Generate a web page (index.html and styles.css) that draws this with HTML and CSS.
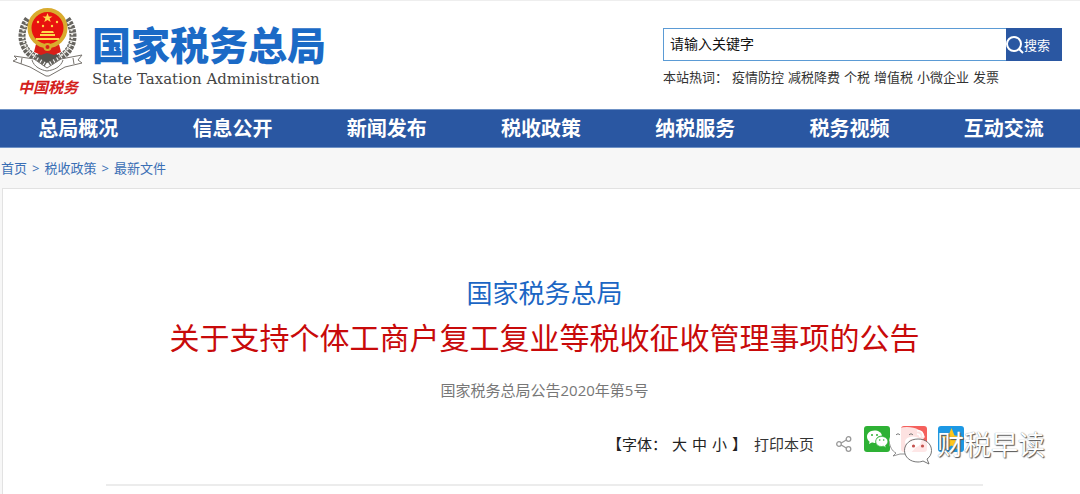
FILE: index.html
```
<!DOCTYPE html>
<html lang="zh-CN">
<head>
    <meta charset="UTF-8">
    <meta name="viewport" content="width=device-width, initial-scale=1.0">
    <title>国家税务总局</title>
    <link rel="stylesheet" href="styles.css">
</head>
<body>
    <header class="header">
        <a href="#" class="brand">
            <span class="emblem">
                <svg viewBox="12 5 72 71" width="72" height="71" aria-hidden="true">
                    <!-- wheat ears -->
                    <g fill="none" stroke="#66645f" stroke-width="7" stroke-dasharray="3 1">
                        <path d="M28 18C19 30 19 48 36 57L46 63"/>
                        <path d="M67 18C76 30 76 48 59 57L49 63"/>
                    </g>
                    <g fill="none" stroke="#e9e7e0" stroke-width="2" stroke-dasharray="2 2">
                        <path d="M27 21C20 32 21 46 36 56"/>
                        <path d="M68 21C75 32 74 46 59 56"/>
                    </g>
                    <!-- ribbon -->
                    <path d="M13 60L17 58 14 55 34 58 47 67 61 58 82 54 78 59 82 62 65 66 49 75H46L30 66Z" fill="#fff" stroke="#77736e"/>
                    <path d="M22 57L21 63M73 57L74 63M32 59C34 66 41 69 47 70C54 69 61 66 63 59" fill="none" stroke="#77736e"/>
                    <path d="M36 55L47 62 59 55 54 51H41Z" fill="#55544f"/>
                    <!-- national emblem -->
                    <path d="M36 43L34 51 41 54 47 52 54 54 61 51 59 43Z" fill="#d91e18"/>
                    <circle cx="47.5" cy="27" r="18" fill="#e8130f" stroke="#d9ab2e" stroke-width="4"/>
                    <path d="M47.5 12L48.8 15.5H52.5L49.6 17.6 50.7 21 47.5 19 44.3 21 45.4 17.6 42.5 15.5H46.2Z" fill="#ffd94a"/>
                    <g fill="#ffd94a">
                        <circle cx="38" cy="21" r="1.2"/>
                        <circle cx="57" cy="21" r="1.2"/>
                        <circle cx="43" cy="25" r="1.2"/>
                        <circle cx="52" cy="25" r="1.2"/>
                        <path d="M42 30H53L54 32H41ZM40 33H55V35H40ZM36 37H59V39H36Z"/>
                    </g>
                    <circle cx="47.5" cy="46" r="4" fill="#d9ab2e"/>
                    <circle cx="47.5" cy="46" r="2" fill="#d91e18"/>
                </svg>
                <span class="emblem-text">中国税务</span>
            </span>
            <span class="brand-name">
                <span class="brand-cn">国家税务总局</span>
                <span class="brand-en">State Taxation Administration</span>
            </span>
        </a>

        <div class="search">
            <form class="search-form">
                <input type="text" class="search-input" value="请输入关键字" aria-label="请输入关键字">
                <button type="button" class="search-button">
                    <svg viewBox="0 0 18 18" width="18" height="18" fill="none" stroke="#fff" stroke-width="2" aria-hidden="true">
                        <circle cx="8" cy="8" r="7"/>
                        <path d="M13 13L17 17"/>
                    </svg>搜索
                </button>
            </form>
            <div class="hot-words">
                <span class="hot-label">本站热词：</span>
                <a href="#">疫情防控</a>
                <a href="#">减税降费</a>
                <a href="#">个税</a>
                <a href="#">增值税</a>
                <a href="#">小微企业</a>
                <a href="#">发票</a>
            </div>
        </div>
    </header>

    <nav class="navbar">
        <a href="#">总局概况</a>
        <a href="#">信息公开</a>
        <a href="#">新闻发布</a>
        <a href="#">税收政策</a>
        <a href="#">纳税服务</a>
        <a href="#">税务视频</a>
        <a href="#">互动交流</a>
    </nav>

    <div class="breadcrumb">
        <a href="#">首页</a>
        <span>&gt;</span>
        <a href="#">税收政策</a>
        <span>&gt;</span>
        <a href="#">最新文件</a>
    </div>

    <main class="article">
        <h2 class="article-org">国家税务总局</h2>
        <h1 class="article-title">关于支持个体工商户复工复业等税收征收管理事项的公告</h1>
        <p class="article-number">国家税务总局公告2020年第5号</p>

        <div class="tools">
            <div class="font-size">
                <span>【字体：</span>
                <button type="button">大</button>
                <button type="button">中</button>
                <button type="button">小</button>
                <span>】</span>
            </div>
            <a href="#" class="print">打印本页</a>
            <svg class="share" viewBox="0 0 16 16" width="16" height="16" fill="none" stroke="#999" stroke-width="1.3" aria-hidden="true">
                <circle cx="3" cy="8" r="2.3"/>
                <circle cx="12.5" cy="3" r="2.3"/>
                <circle cx="12.5" cy="13" r="2.3"/>
                <path d="M5.2 7L10.3 4M5.2 9L10.3 12"/>
            </svg>
            <div class="share-icons">
                <a href="#" aria-label="微信">
                    <svg viewBox="0 0 26 26" width="26" height="26">
                        <rect width="26" height="26" rx="3" fill="#2eb135"/>
                        <path d="M10.5 4.5C6 4.5 3 7.3 3 10.8C3 13 4 14.5 5.6 15.7L5 18 7.8 16.6C9 17 10 17 11.5 17C11 12.5 14 9.5 18 9.5C17.5 6.5 14.5 4.5 10.5 4.5Z" fill="#fff"/>
                        <path d="M17.5 10.5C14 10.5 11.8 12.7 11.8 15.5C11.8 18.5 14.3 20.5 17.5 20.5L19.5 20.2 22 21.5 21.5 19.3C23 18.3 23.8 17 23.8 15.5C23.8 12.7 21 10.5 17.5 10.5Z" fill="#fff" stroke="#2eb135" stroke-width=".6"/>
                        <g fill="#2eb135">
                            <circle cx="8" cy="9" r="1"/>
                            <circle cx="13" cy="9" r="1"/>
                            <circle cx="15.7" cy="14" r=".8"/>
                            <circle cx="19.7" cy="14" r=".8"/>
                        </g>
                    </svg>
                </a>
                <a href="#" aria-label="微博">
                    <svg viewBox="0 0 26 26" width="26" height="26">
                        <rect width="26" height="26" rx="3" fill="#f5605c"/>
                        <ellipse cx="12" cy="16" rx="8" ry="5.5" fill="#fff"/>
                        <circle cx="11" cy="16" r="3" fill="#f5605c"/>
                        <path d="M16 5C20 4 23 7 22 11M16 8C18 8 19 9 19 11" fill="none" stroke="#fff" stroke-width="1.5"/>
                    </svg>
                </a>
                <a href="#" aria-label="QQ空间">
                    <svg viewBox="0 0 26 26" width="26" height="26">
                        <rect width="26" height="26" rx="3" fill="#1c98e4"/>
                        <path d="M13.5 2L16.5 9.5 24 10.2 18.5 15.5 20 23.5 13.5 19.5 7 23.5 8.5 15.5 3 10.2 10.5 9.5Z" fill="#ffc61c"/>
                    </svg>
                </a>
            </div>
            <div class="watermark">
                <svg viewBox="889 424 44 40" width="44" height="40" aria-hidden="true">
                    <path d="M907 426C896 426 889 433 889 441C889 446 892 450 896 453L893 455 901 454C904 455 906 455 909 454L925 436C923 430 916 426 907 426Z" fill="#fff" fill-opacity=".82"/>
                    <path d="M889 440C890 446 892 450 896 452L893 455 900 453H905" fill="none" stroke="#777" stroke-width=".8"/>
                    <path d="M918 438C910 438 904.5 443 904.5 449.5C904.5 456 910 461 918 461C920 461 922 460.5 923 460L929 463 927 458C930 456 931.5 453 931.5 449.5C931.5 443 926 438 918 438Z" fill="#fff" fill-opacity=".85" stroke="#666" stroke-width=".9"/>
                    <path d="M896 434C897 432.5 899 432.5 900 434M909 434C910 432.5 912 432.5 913 434" fill="none" stroke="#777"/>
                    <circle cx="913.5" cy="445" r="1.6" fill="#c4524e"/>
                    <circle cx="922.5" cy="445" r="1.6" fill="#c4524e"/>
                </svg>
                <span>财税早读</span>
            </div>
        </div>
    </main>
</body>
</html>
```

FILE: styles.css
```
* {
    box-sizing: border-box;
}

body {
    font-family: "Open Sans", "Noto Sans CJK SC", sans-serif;
    margin: 0;
    font-size: 13px;
    color: #333;
    background-color: #f7f7f7;
}

a {
    color: inherit;
    text-decoration: none;
}

button {
    font: inherit;
    color: inherit;
    background: none;
    border: none;
    padding: 0;
    cursor: pointer;
}

svg {
    display: block;
}

/* header */
.header {
    display: flex;
    justify-content: space-between;
    align-items: flex-start;
    min-height: 109px;
    padding: 5px 18px 0 12px;
    background-color: #fff;
    border-top: 1px solid #eee;
}

.brand {
    display: flex;
    gap: 8px;
}

.emblem {
    display: flex;
    flex-direction: column;
    align-items: center;
}

.emblem-text {
    font-size: 15px;
    line-height: 20px;
    font-weight: bold;
    font-style: italic;
    color: #d3211c;
}

.brand-name {
    display: flex;
    flex-direction: column;
    gap: 4px;
    padding-top: 19px;
}

.brand-cn {
    font-size: 39px;
    line-height: 40px;
    font-weight: 900;
    color: #1b6ac6;
}

.brand-en {
    font-family: "DejaVu Serif", serif;
    font-size: 15px;
    line-height: 20px;
    color: #444;
}

.search {
    width: 399px;
    padding-top: 22px;
}

.search-form {
    display: flex;
    height: 33px;
}

.search-input {
    flex: 1;
    min-width: 0;
    padding: 0 6px 4px;
    font-family: inherit;
    font-size: 14px;
    color: #111;
    background-color: #fff;
    border: 1px solid #5b9bd5;
    border-right: none;
}

.search-button {
    display: flex;
    align-items: center;
    width: 56px;
    color: #fff;
    background-color: #2a57a2;
}

.hot-words {
    display: flex;
    gap: 4px;
    margin-top: 6px;
    line-height: 20px;
}

/* main menu */
.navbar {
    display: grid;
    grid-template-columns: repeat(7, 1fr);
    background-color: #2a57a2;
    border-top: 1px solid #6f92c6;
    border-bottom: 1px solid #6f92c6;
}

.navbar a {
    padding-left: 2px;
    font-size: 20px;
    line-height: 37px;
    font-weight: bold;
    text-align: center;
    color: #fff;
}

.breadcrumb {
    display: flex;
    gap: 5px;
    padding: 10px 1px;
    line-height: 20px;
    color: #3a6fb5;
}

/* article */
.article {
    min-height: 306px;
    margin-left: 2px;
    padding: 84px 97px 0 103px;
    background-color: #fff;
    border-top: 1px solid #e2e2e2;
    border-left: 1px solid #e2e2e2;
    text-align: center;
}

.article-org {
    margin: 0;
    font-size: 26px;
    line-height: 40px;
    font-weight: normal;
    color: #1b66c4;
}

.article-title {
    margin: 0;
    font-size: 30px;
    line-height: 50px;
    font-weight: normal;
    color: #c80a0a;
}

.article-number {
    margin: 17px 0 26px;
    font-size: 15px;
    line-height: 20px;
    color: #777;
}

.tools {
    position: relative;
    display: flex;
    justify-content: flex-end;
    align-items: center;
    padding: 0 19px 22px 0;
    font-size: 15px;
    line-height: 36px;
    border-bottom: 2px solid #ececec;
}

.font-size {
    display: flex;
    gap: 5px;
    color: #222;
}

.print {
    margin-left: 7px;
}

.share {
    margin: 0 12px 0 22px;
}

.share-icons {
    display: flex;
    gap: 11px;
    align-self: flex-start;
}

.watermark {
    position: absolute;
    top: -1px;
    right: -62px;
    display: flex;
    gap: 4px;
    font-size: 27px;
    line-height: 40px;
    color: #fff;
    text-shadow: 1px 1px 1px #555, 0 0 1px #777;
}
```
